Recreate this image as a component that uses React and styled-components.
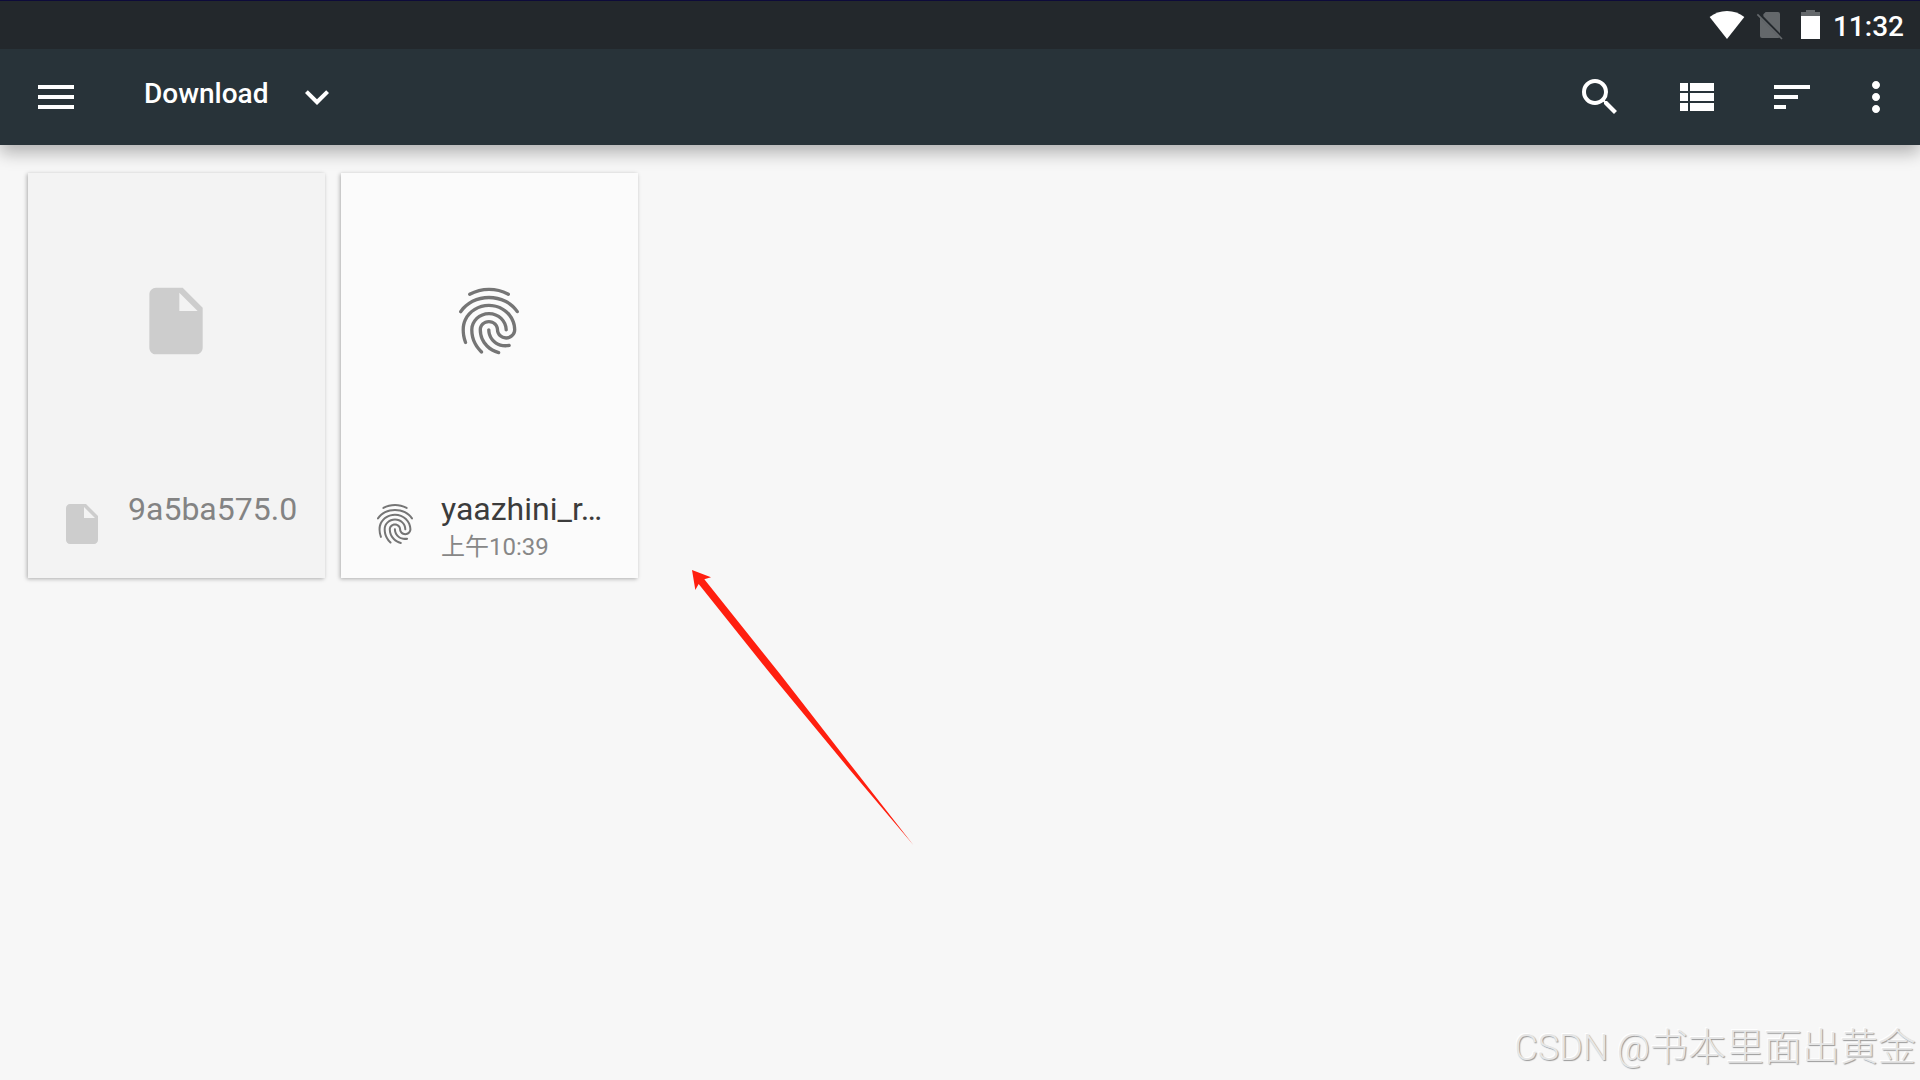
import React from "react";
import styled, { createGlobalStyle } from "styled-components";

const GlobalStyle = createGlobalStyle`
  * { box-sizing: border-box; }
  body {
    margin: 0;
    background: #f7f7f7;
    font-family: Roboto, "Noto Sans CJK SC", sans-serif;
  }
  button { font: inherit; color: inherit; border: 0; background: none; padding: 0; }
`;

const Screen = styled.div`
  position: relative;
  display: flex;
  flex-direction: column;
  min-height: 100vh;
  overflow: hidden;
`;

const StatusBar = styled.div`
  position: relative;
  z-index: 1;
  display: flex;
  align-items: center;
  justify-content: flex-end;
  gap: 12px;
  height: 49px;
  padding-right: 16px;
  border-top: 1px solid #0d0b3a;
  background: #23282c;
  color: #fff;
`;

const Clock = styled.time`
  padding-top: 4px;
  font-size: 28px;
  font-weight: 500;
  line-height: 32px;
`;

const StatusIcon = styled.svg`
  display: block;
  height: 30px;
  overflow: visible;
`;

const AppBar = styled.header`
  display: flex;
  align-items: center;
  height: 96px;
  padding: 0 20px 0 32px;
  background: #283339;
  color: #fff;
  box-shadow: 0 8px 16px rgba(0, 0, 0, 0.28);
`;

const IconButton = styled.button`
  display: flex;
  width: 48px;
  height: 48px;
  cursor: pointer;
`;

const FolderButton = styled.button`
  display: flex;
  align-items: center;
  gap: 25px;
  margin-left: 64px;
  cursor: pointer;
`;

const FolderName = styled.span`
  padding-bottom: 6px;
  font-size: 28px;
  font-weight: 500;
  line-height: 32px;
`;

const Actions = styled.div`
  display: flex;
  align-items: center;
  gap: 48px;
  margin-left: auto;

  & > :last-child {
    margin-left: -12px;
  }
`;

const Icon = styled.svg`
  display: block;
  flex: none;
  width: ${(p) => p.$size}px;
  height: ${(p) => p.$size}px;
  fill: currentColor;
`;

const Grid = styled.ul`
  display: flex;
  flex-wrap: wrap;
  gap: 16px;
  margin: 0;
  padding: 28px;
  list-style: none;
`;

const Card = styled.button`
  display: flex;
  flex-direction: column;
  width: 297px;
  background: ${(p) => (p.disabled ? "#f3f3f3" : "#fbfbfb")};
  color: ${(p) => (p.disabled ? "#cdcdcd" : "#757575")};
  box-shadow: -1px 1px 4px rgba(0, 0, 0, 0.3);
  text-align: left;
`;

const Preview = styled.span`
  display: flex;
  align-items: center;
  justify-content: center;
  width: 296px;
  height: 296px;
`;

const Details = styled.span`
  display: flex;
  gap: 22px;
  width: 100%;
  height: 109px;
  padding: 20px 24px 0 30px;
`;

const TypeIcon = styled.span`
  padding-top: 11px;
`;

const Labels = styled.span`
  display: flex;
  flex-direction: column;
  min-width: 0;
`;

const Name = styled.span`
  overflow: hidden;
  color: ${(p) => (p.$muted ? "#838383" : "#3c3c3c")};
  font-size: 32px;
  line-height: 40px;
  white-space: nowrap;
  text-overflow: ellipsis;
`;

const Modified = styled.span`
  color: #878787;
  font-size: 24px;
  line-height: 36px;
`;

const Arrow = styled.svg`
  position: absolute;
  left: 692px;
  top: 570px;
  width: 222px;
  height: 276px;
  pointer-events: none;
`;

const Watermark = styled.div`
  position: absolute;
  right: 4px;
  bottom: 4px;
  color: #e6e6e6;
  font-size: 38px;
  font-weight: 300;
  line-height: 56px;
  text-shadow: 1px 1px 1px #999, -1px -1px 0 #fff;
  white-space: nowrap;
`;

const Site = styled.span`
  font-size: 36px;
`;

const paths = {
  menu: "M3 18h18v-2H3v2zm0-5h18v-2H3v2zm0-7v2h18V6H3z",
  expand: "M16.59 8.59 12 13.17 7.41 8.59 6 10l6 6 6-6z",
  search:
    "M15.5 14h-.79l-.28-.27A6.471 6.471 0 0 0 16 9.5 6.5 6.5 0 1 0 9.5 16c1.61 0 3.09-.59 4.23-1.57l.27.28v.79l5 4.99L20.49 19l-4.99-5zm-6 0C7.01 14 5 11.99 5 9.5S7.01 5 9.5 5 14 7.01 14 9.5 11.99 14 9.5 14z",
  list: "M4 14h4v-4H4v4zm0 5h4v-4H4v4zM4 9h4V5H4v4zm5 5h12v-4H9v4zm0 5h12v-4H9v4zM9 5v4h12V5H9z",
  sort: "M3 18h6v-2H3v2zM3 6v2h18V6H3zm0 7h12v-2H3v2z",
  more: "M12 8c1.1 0 2-.9 2-2s-.9-2-2-2-2 .9-2 2 .9 2 2 2zm0 2c-1.1 0-2 .9-2 2s.9 2 2 2 2-.9 2-2-.9-2-2-2zm0 6c-1.1 0-2 .9-2 2s.9 2 2 2 2-.9 2-2-.9-2-2-2z",
  file: "M6 2c-1.1 0-1.99.9-1.99 2L4 20c0 1.1.89 2 1.99 2H18c1.1 0 2-.9 2-2V8l-6-6H6zm7 7V3.5L18.5 9H13z",
  fingerprint:
    "M17.81 4.47c-.08 0-.16-.02-.23-.06C15.66 3.42 14 3 12.01 3c-1.98 0-3.86.47-5.57 1.41-.24.13-.54.04-.68-.2-.13-.24-.04-.55.2-.68C7.82 2.52 9.86 2 12.01 2c2.13 0 3.99.47 6.03 1.52.25.13.34.43.21.67-.09.18-.26.28-.44.28zM3.5 9.72c-.1 0-.2-.03-.29-.09-.23-.16-.28-.47-.12-.7.99-1.4 2.25-2.5 3.75-3.27C9.98 4.04 14 4.03 17.15 5.65c1.5.77 2.76 1.86 3.75 3.25.16.22.11.54-.12.7-.23.16-.54.11-.7-.12-.9-1.26-2.04-2.25-3.39-2.94-2.87-1.47-6.54-1.47-9.4.01-1.36.7-2.5 1.7-3.4 2.96-.08.14-.23.21-.39.21zm6.25 12.07c-.13 0-.26-.05-.35-.15-.87-.87-1.34-1.43-2.01-2.64-.69-1.23-1.05-2.73-1.05-4.34 0-2.97 2.54-5.39 5.66-5.39s5.66 2.42 5.66 5.39c0 .28-.22.5-.5.5s-.5-.22-.5-.5c0-2.42-2.09-4.39-4.66-4.39-2.57 0-4.66 1.97-4.66 4.39 0 1.44.32 2.77.93 3.85.64 1.15 1.08 1.64 1.85 2.42.19.2.19.51 0 .71-.11.1-.24.15-.37.15zm7.17-1.85c-1.19 0-2.24-.3-3.1-.89-1.49-1.01-2.38-2.65-2.38-4.39 0-.28.22-.5.5-.5s.5.22.5.5c0 1.41.72 2.74 1.94 3.56.71.48 1.54.71 2.54.71.24 0 .64-.03 1.04-.1.27-.05.53.13.58.41.05.27-.13.53-.41.58-.57.11-1.07.12-1.21.12zM14.91 22c-.04 0-.09-.01-.13-.02-1.59-.44-2.63-1.03-3.72-2.1-1.4-1.39-2.17-3.24-2.17-5.22 0-1.62 1.38-2.94 3.08-2.94 1.7 0 3.08 1.32 3.08 2.94 0 1.07.93 1.94 2.08 1.94s2.08-.87 2.08-1.94c0-3.77-3.25-6.83-7.25-6.83-2.84 0-5.44 1.58-6.61 4.03-.39.81-.59 1.76-.59 2.8 0 .78.07 2.01.67 3.61.1.26-.03.55-.29.64-.26.1-.55-.04-.64-.29-.49-1.31-.73-2.61-.73-3.96 0-1.2.23-2.29.68-3.24 1.33-2.79 4.28-4.6 7.51-4.6 4.55 0 8.25 3.51 8.25 7.83 0 1.62-1.38 2.94-3.08 2.94s-3.08-1.32-3.08-2.94c0-1.07-.93-1.94-2.08-1.94s-2.08.87-2.08 1.94c0 1.71.66 3.31 1.87 4.51.95.94 1.86 1.46 3.27 1.85.27.07.42.35.35.61-.05.23-.26.38-.47.38z",
};

const files = [
  { name: "9a5ba575.0", icon: "file", disabled: true },
  { name: "yaazhini_r…", icon: "fingerprint", modified: "上午10:39" },
];

function Glyph({ name, size = 48 }) {
  return (
    <Icon $size={size} viewBox="0 0 24 24" aria-hidden="true">
      <path d={paths[name]} />
    </Icon>
  );
}

function FileCard({ file }) {
  return (
    <Card disabled={file.disabled}>
      <Preview>
        <Glyph name={file.icon} size={80} />
      </Preview>
      <Details>
        <TypeIcon>
          <Glyph name={file.icon} />
        </TypeIcon>
        <Labels>
          <Name $muted={file.disabled}>{file.name}</Name>
          {file.modified && <Modified>{file.modified}</Modified>}
        </Labels>
      </Details>
    </Card>
  );
}

export default function App() {
  return (
    <Screen>
      <GlobalStyle />
      <StatusBar>
        <StatusIcon width="36" viewBox="54 30 108 90" aria-hidden="true">
          <path fill="#fff" d="M108 117 56 51Q78 33 108 33T160 51Z" />
        </StatusIcon>
        <StatusIcon width="31" viewBox="198 30 93 90" aria-hidden="true">
          <path
            fill="#64686b"
            d="M224 36H261Q267 36 267 42V100L217 49V43ZM207 53 266 112Q265 114 261 114H213Q207 114 207 108Z"
          />
          <path stroke="#64686b" strokeWidth="5" d="M199 43 273 117" />
        </StatusIcon>
        <StatusIcon width="21" viewBox="327 30 63 90" aria-hidden="true">
          <path fill="#64686b" d="M345 30H372V36H387V49H330V36H345Z" />
          <path fill="#fff" d="M330 48H387V117H330Z" />
        </StatusIcon>
        <Clock>11:32</Clock>
      </StatusBar>
      <AppBar>
        <IconButton aria-label="Menu">
          <Glyph name="menu" />
        </IconButton>
        <FolderButton>
          <FolderName>Download</FolderName>
          <Glyph name="expand" />
        </FolderButton>
        <Actions>
          <IconButton aria-label="Search">
            <Glyph name="search" />
          </IconButton>
          <IconButton aria-label="List view">
            <Glyph name="list" />
          </IconButton>
          <IconButton aria-label="Sort">
            <Glyph name="sort" />
          </IconButton>
          <IconButton aria-label="More options">
            <Glyph name="more" />
          </IconButton>
        </Actions>
      </AppBar>
      <main>
        <Grid>
          {files.map((file) => (
            <li key={file.name}>
              <FileCard file={file} />
            </li>
          ))}
        </Grid>
      </main>
      <Arrow viewBox="66 60 666 828" aria-hidden="true">
        <path fill="#ff1f0f" d="M66 60 123 82 103 88 330 372 550 655 730 885 540 660 310 382 86 102 76 120Z" />
      </Arrow>
      <Watermark>
        <Site>CSDN @</Site>书本里面出黄金
      </Watermark>
    </Screen>
  );
}
